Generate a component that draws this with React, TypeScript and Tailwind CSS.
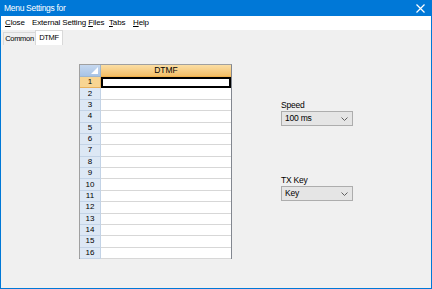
import { useState } from "react";

const rows = Array.from({ length: 16 }, (_, i) => i + 1);

function Chevron() {
  return (
    <svg width="7" height="4" viewBox="0 0 7 4" className="shrink-0">
      <path d="M0.5 0.5 L3.5 3.5 L6.5 0.5" fill="none" stroke="#606060" strokeWidth="1" />
    </svg>
  );
}

function Select({ value }: { value: string }) {
  return (
    <div className="w-[72px] h-[15px] flex items-center justify-between pl-[3px] pr-[4px] bg-[#e5e5e5] border border-[#adadad] text-[8.5px] text-black tracking-[-0.2px]">
      <span>{value}</span>
      <Chevron />
    </div>
  );
}

export default function App() {
  const [tab, setTab] = useState("DTMF");

  return (
    <div
      className="w-[432px] h-[289px] flex flex-col bg-[#f0f0f0] border border-[#0078d7] overflow-hidden"
      style={{ fontFamily: '"Liberation Sans", Arial, sans-serif' }}
    >
      {/* title bar */}
      <div className="h-[15px] shrink-0 bg-[#0078d7] flex items-center justify-between pl-[3px] pr-[6px] text-white text-[8.5px] tracking-[-0.3px]">
        <span>Menu Settings for</span>
        <svg width="9" height="9" viewBox="0 0 9 9">
          <path d="M0.5 0.5 L8.5 8.5 M8.5 0.5 L0.5 8.5" stroke="#fff" strokeWidth="1.2" />
        </svg>
      </div>

      {/* menu bar */}
      <div className="h-[14px] shrink-0 flex items-center pl-[4px] text-[8px] text-black bg-white tracking-[-0.15px] whitespace-nowrap">
        <span className="w-[27px] shrink-0"><u>C</u>lose</span>
        <span className="w-[77px] shrink-0">External Setting <u>F</u>iles</span>
        <span className="w-[24px] shrink-0"><u>T</u>abs</span>
        <span className="shrink-0"><u>H</u>elp</span>
      </div>

      {/* tabs */}
      <div className="h-[15px] shrink-0 flex items-end pl-[2px] text-[7.5px] text-black tracking-[-0.3px]">
        {["Common", "DTMF"].map((t) =>
          t === tab ? (
            <button key={t} onClick={() => setTab(t)} className="w-[28px] h-[15px] flex items-center justify-center bg-white border border-b-0 border-[#d9d9d9]">
              {t}
            </button>
          ) : (
            <button key={t} onClick={() => setTab(t)} className="w-[32px] h-[13px] flex items-center justify-center bg-[#f0f0f0] border border-b-0 border-r-0 border-[#d9d9d9]">
              {t}
            </button>
          )
        )}
      </div>

      <div className="flex-1 flex">
        {/* grid */}
        <div className="ml-[78px] mt-[19px] w-[153px] h-[195px] flex flex-col bg-white border border-[#828790] border-t-[#a0a0a0] border-l-[#a0a0a0]">
          <div className="h-[12px] flex">
            <div className="w-[21px] relative bg-gradient-to-b from-[#c6d8ef] to-[#a8c4e6] border-r border-b border-[#9eb6ce]">
              <div className="absolute right-[2px] bottom-[2px] w-0 h-0 border-l-[7px] border-l-transparent border-b-[7px] border-b-[#ffffff]" />
            </div>
            <div className="flex-1 flex items-center justify-center bg-gradient-to-b from-[#fbdea4] to-[#f3be66] border-b border-[#f2b24c] text-[8.5px] text-black">
              DTMF
            </div>
          </div>
          {rows.map((r) => (
            <div key={r} className="h-[11.375px] flex">
              <div
                className={
                  r === 1
                    ? "w-[21px] flex items-center justify-center bg-[#f8d592] border-r border-b border-[#e8b15c] text-[8px] text-black"
                    : "w-[21px] flex items-center justify-center bg-[#dde8f5] border-r border-b border-[#c3d3e6] text-[8px] text-black"
                }
              >
                {r}
              </div>
              <div
                className={
                  r === 1
                    ? "flex-1 border-2 border-black"
                    : "flex-1 border-b border-[#d7d7d7]"
                }
              />
            </div>
          ))}
        </div>

        {/* right controls */}
        <div className="ml-[49px] flex flex-col">
          <div className="mt-[54px] text-[8.5px] text-black leading-[12px] tracking-[-0.2px]">Speed</div>
          <Select value="100 ms" />
          <div className="mt-[48px] text-[8.5px] text-black leading-[12px] tracking-[-0.2px]">TX Key</div>
          <Select value="Key" />
        </div>
      </div>
    </div>
  );
}
